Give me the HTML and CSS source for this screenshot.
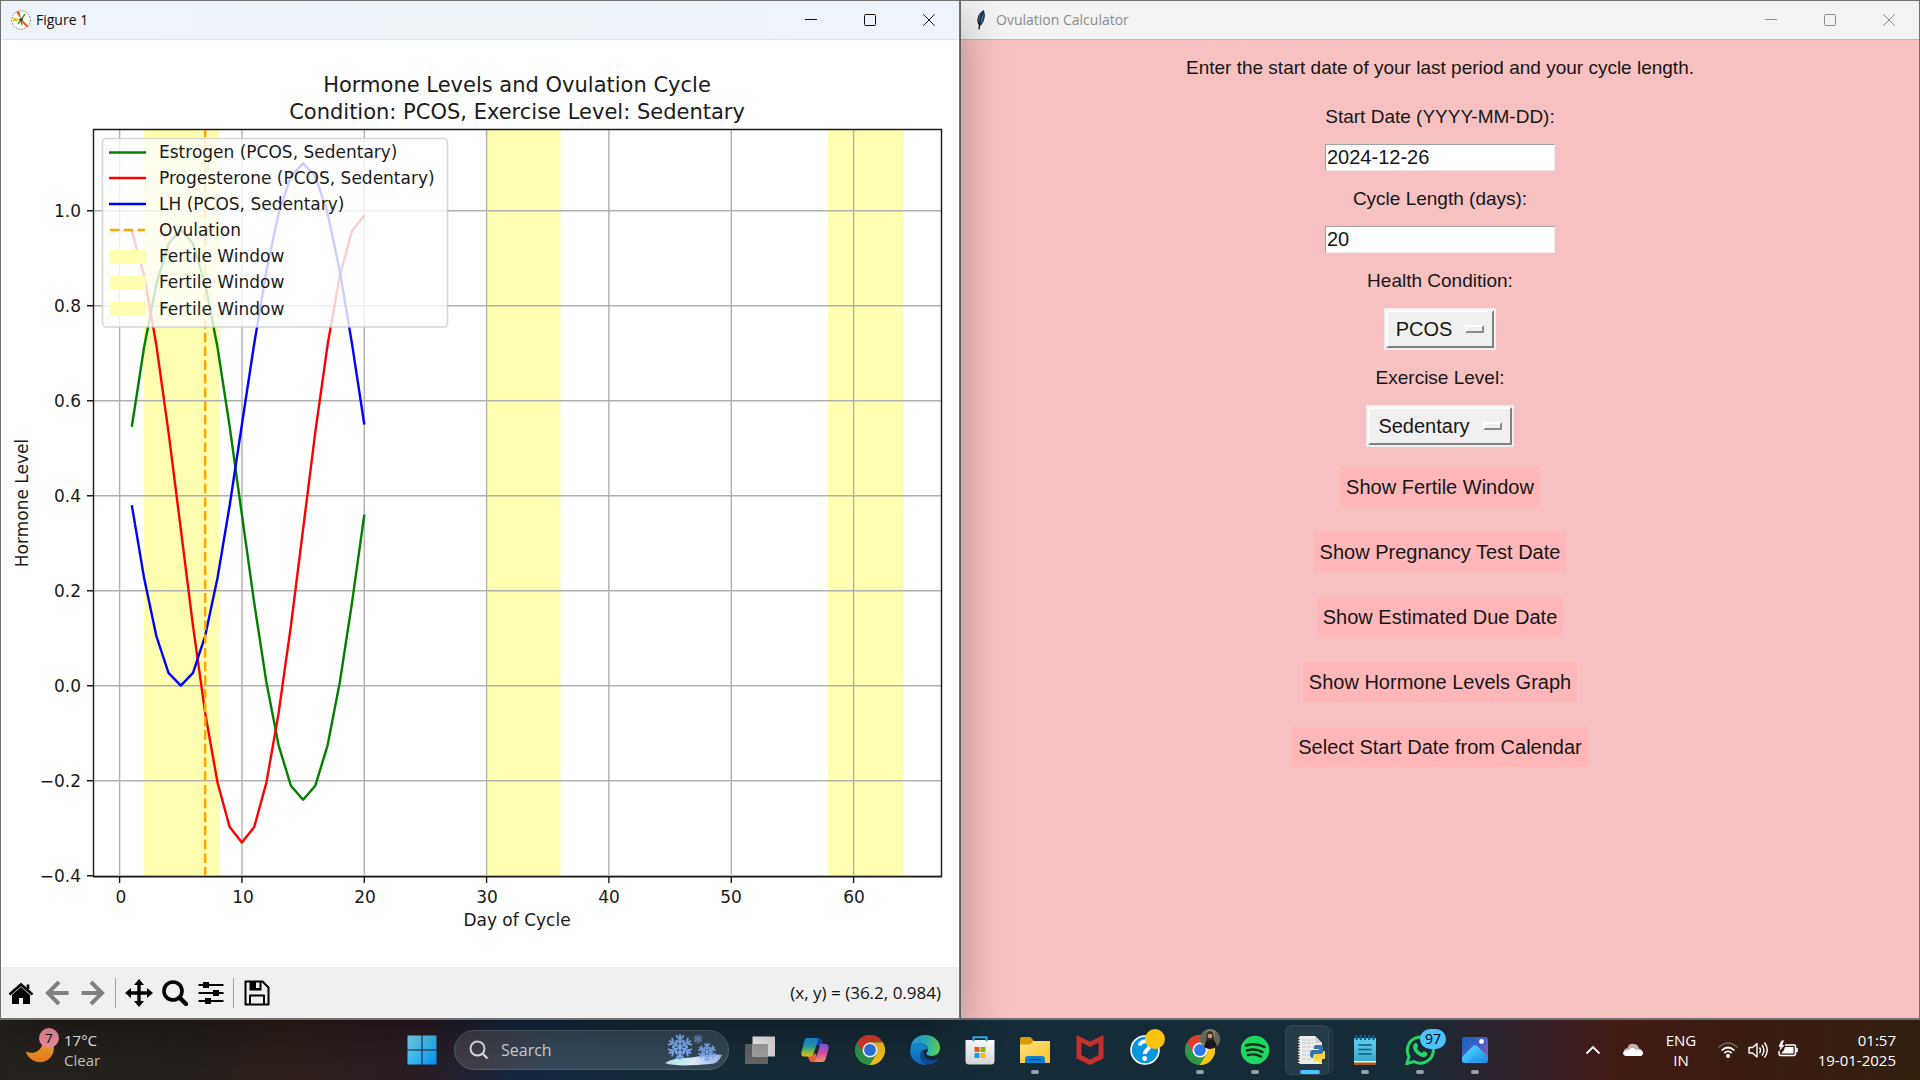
FILE: index.html
```html
<!DOCTYPE html>
<html lang="en">
<head>
<meta charset="utf-8">
<title>Ovulation Calculator</title>
<link rel="stylesheet" href="styles.css">
</head>
<body>
<main class="desktop">
  <section class="window figure-window">
    <header class="titlebar">
      <svg class="title-icon" viewBox="0 0 20 20" aria-hidden="true">
        <circle cx="10" cy="10" r="9.3" fill="#fff" stroke="#777" stroke-width=".8" stroke-dasharray="2 1"/>
        <path d="M10 9 5 1.8 8.5 1.2Z" fill="#f4510b"/><path d="M10 10 2 11.5 2.4 7.4Z" fill="#f5b400"/>
        <path d="m10 10 6.8 6.8" stroke="#f4510b" stroke-width="1.8"/><path d="m10 10 4-6M10 10l-3 4M10 10l1 5" stroke="#3aa335" stroke-width="1.5"/>
        <circle cx="10" cy="9.5" r="1.6" fill="#333"/>
      </svg>
      <h1 class="title-text">Figure 1</h1>
      <div class="caption-buttons">
        <button class="caption-button" aria-label="Minimize"><svg viewBox="0 0 12 12"><path d="M0 5.5h12"/></svg></button>
        <button class="caption-button" aria-label="Maximize"><svg viewBox="0 0 12 12"><rect x=".5" y=".5" width="11" height="11" rx="1"/></svg></button>
        <button class="caption-button" aria-label="Close"><svg viewBox="0 0 12 12"><path d="m.3.3 11.4 11.4M11.7.3.3 11.7"/></svg></button>
      </div>
    </header>
    <svg class="chart" viewBox="2 40 958 927" role="img" aria-label="Hormone levels by day of cycle">
      <g class="fertile">
        <path d="M145 129h75v748h-75zM488 129h73.500v748H488zM829 129h75v748h-75z"/>
      </g>
      <path class="grid" d="M120.600 129v748M243 129v748M365.300 129v748M487.600 129v748M609.900 129v748M732.300 129v748M854.600 129v748M94 210.800h848M94 305.800h848M94 400.800h848M94 495.700h848M94 590.700h848M94 685.700h848M94 780.700h848M94 875.700h848"/>
      <polyline class="line estrogen" points="132.8,426.7 145.1,347.2 157.3,284.2 169.5,243.8 181.8,229.8 194,243.8 206.2,284.2 218.5,347.2 230.7,426.7 242.9,514.7 255.2,602.8 267.4,682.2 279.6,745.3 291.9,785.7 304.1,799.7 316.3,785.7 328.6,745.3 340.8,682.2 353,602.8 365.3,514.7"/>
      <polyline class="line progesterone" points="132.8,230.9 145.1,275.4 157.3,344.8 169.5,432.1 181.8,529 194,625.8 206.2,713.2 218.5,782.5 230.7,827.1 242.9,842.4 255.2,827.1 267.4,782.5 279.6,713.2 291.9,625.8 304.1,529 316.3,432.1 328.6,344.8 340.8,275.4 353,230.9 365.3,215.5"/>
      <polyline class="line lh" points="132.8,505.2 145.1,578 157.3,635.8 169.5,672.9 181.8,685.7 194,672.9 206.2,635.8 218.5,578 230.7,505.2 242.9,424.5 255.2,343.8 267.4,271 279.6,213.2 291.9,176.1 304.1,163.3 316.3,176.1 328.6,213.2 340.8,271 353,343.8 365.3,424.5"/>
      <path class="line ovulation" d="M206.200 876.700V129.300"/>
      <path class="axes" d="M94.500 129.500h848v747.300h-848zM88 210.800h6M88 305.800h6M88 400.800h6M88 495.700h6M88 590.700h6M88 685.700h6M88 780.700h6M88 875.700h6M120.600 877v6M243 877v6M365.300 877v6M487.600 877v6M609.900 877v6M732.300 877v6M854.600 877v6"/>
      <g class="chart-title">
        <text x="518" y="92">Hormone Levels and Ovulation Cycle</text>
        <text x="518" y="119">Condition: PCOS, Exercise Level: Sedentary</text>
      </g>
      <g class="tick-y">
        <text x="82" y="217">1.0</text><text x="82" y="312">0.8</text><text x="82" y="407">0.6</text><text x="82" y="502">0.4</text>
        <text x="82" y="597">0.2</text><text x="82" y="692">0.0</text><text x="82" y="787">−0.2</text><text x="82" y="882">−0.4</text>
      </g>
      <g class="tick-x">
        <text x="122" y="903">0</text><text x="244" y="903">10</text><text x="366" y="903">20</text><text x="488" y="903">30</text>
        <text x="610" y="903">40</text><text x="732" y="903">50</text><text x="855" y="903">60</text>
        <text x="518" y="926">Day of Cycle</text>
        <text transform="translate(29 503) rotate(-90)">Hormone Level</text>
      </g>
      <rect class="legend-box" x="103.500" y="138.500" width="345" height="188.500" rx="4"/>
      <path class="line estrogen" d="M110 152.500h37"/>
      <path class="line progesterone" d="M110 178h37"/>
      <path class="line lh" d="M110 204h37"/>
      <path class="line ovulation" d="M111 230h35"/>
      <path class="fertile" d="M110.500 250H147v14h-36.500zM110.500 276H147v14h-36.500zM110.500 302H147v14h-36.500z"/>
      <g class="legend-text">
        <text x="160" y="158">Estrogen (PCOS, Sedentary)</text>
        <text x="160" y="184">Progesterone (PCOS, Sedentary)</text>
        <text x="160" y="210">LH (PCOS, Sedentary)</text>
        <text x="160" y="236">Ovulation</text>
        <text x="160" y="262">Fertile Window</text>
        <text x="160" y="288">Fertile Window</text>
        <text x="160" y="315">Fertile Window</text>
      </g>
    </svg>
    <footer class="toolbar">
      <div class="tool-group">
        <button class="tool" aria-label="Home"><svg viewBox="0 0 26 26"><path d="M13 7 4 15v9h7v-6h4v6h7v-9z"/><path d="M1.500 14.500 13 4.500l11.500 10M20 9V4.500" fill="none" stroke="#000" stroke-width="2.600"/></svg></button>
        <button class="tool" aria-label="Back" disabled><svg viewBox="0 0 26 26"><path d="M24.500 13H4M15 2 4 13l11 11" fill="none" stroke="#808080" stroke-width="4"/></svg></button>
        <button class="tool" aria-label="Forward" disabled><svg viewBox="0 0 26 26"><path d="M1.500 13H22M11 2l11 11-11 11" fill="none" stroke="#808080" stroke-width="4"/></svg></button>
      </div>
      <div class="tool-group">
        <button class="tool" aria-label="Pan"><svg class="pan" viewBox="0 0 28 28"><path d="M14 0l5 6h-3.300v6.300H22V9l6 5-6 5v-3.300h-6.300V22H19l-5 6-5-6h3.300v-6.300H6V19l-6-5 6-5v3.300h6.300V6H9z"/></svg></button>
        <button class="tool" aria-label="Zoom"><svg viewBox="0 0 26 26"><circle cx="11" cy="11" r="9" fill="none" stroke="#000" stroke-width="3.600"/><path d="m17.500 17.500 6.500 6.500" stroke="#000" stroke-width="4.400" stroke-linecap="round"/></svg></button>
        <button class="tool" aria-label="Configure subplots"><svg viewBox="0 0 26 26"><path d="M.500 5h25M.500 13h25M.500 21h25" stroke="#000" stroke-width="1.800"/><path d="M5 2h6v6H5zM15 10h6v6h-6zM7 18h6v6H7z"/></svg></button>
      </div>
      <div class="tool-group">
        <button class="tool" aria-label="Save"><svg viewBox="0 0 26 26"><path d="M1.500 1.500h17l6 6v17h-23zM6 24.500v-9h14v9" fill="none" stroke="#000" stroke-width="2" stroke-linejoin="round"/><path d="M5.500 1.500h12v9h-12z"/><path d="M12 2.500h3.500V8H12z" fill="#f0f0f0"/></svg></button>
      </div>
      <output class="cursor-position">(x, y) = (36.2, 0.984)</output>
    </footer>
  </section>

  <section class="window calculator-window">
    <header class="titlebar">
      <svg class="title-icon feather" viewBox="0 0 20 20" aria-hidden="true"><path d="M8.500 15C5.500 11 7 4 12.500 1c1.500 5 .5 10-3 14z" fill="#3f79bd" stroke="#172534" stroke-width="1.200"/><path d="M11.500 3C9 8 8.500 13 8 19.500" fill="none" stroke="#111" stroke-width="1.300"/></svg>
      <h1 class="title-text">Ovulation Calculator</h1>
      <div class="caption-buttons">
        <button class="caption-button" aria-label="Minimize"><svg viewBox="0 0 12 12"><path d="M0 5.500h12"/></svg></button>
        <button class="caption-button" aria-label="Maximize"><svg viewBox="0 0 12 12"><rect x=".5" y=".5" width="11" height="11" rx="1"/></svg></button>
        <button class="caption-button" aria-label="Close"><svg viewBox="0 0 12 12"><path d="m.3.3 11.4 11.4M11.700.3.3 11.700"/></svg></button>
      </div>
    </header>
    <form class="calculator">
      <p class="intro">Enter the start date of your last period and your cycle length.</p>
      <label for="start">Start Date (YYYY-MM-DD):</label>
      <input id="start" class="entry" type="text" value="2024-12-26">
      <label for="length">Cycle Length (days):</label>
      <input id="length" class="entry" type="text" value="20">
      <label for="condition">Health Condition:</label>
      <div class="option-menu"><div class="option-face"><select id="condition"><option>PCOS</option></select><span class="option-mark"></span></div></div>
      <label for="exercise">Exercise Level:</label>
      <div class="option-menu"><div class="option-face"><select id="exercise"><option>Sedentary</option></select><span class="option-mark"></span></div></div>
      <div class="actions">
        <button type="button">Show Fertile Window</button>
        <button type="button">Show Pregnancy Test Date</button>
        <button type="button">Show Estimated Due Date</button>
        <button type="button">Show Hormone Levels Graph</button>
        <button type="button">Select Start Date from Calendar</button>
      </div>
    </form>
  </section>
</main>

<nav class="taskbar" aria-label="Taskbar">
  <button class="weather">
    <span class="weather-icon">
      <svg viewBox="0 0 30 30" aria-hidden="true"><defs><linearGradient id="moon" x2="0" y2="1"><stop stop-color="#ffc63a"/><stop offset="1" stop-color="#f0761a"/></linearGradient></defs><path d="M1 16.500c8 4 18-1 17.500-14.500C31 4 31 17 25 23 17 31 3.500 27 1 16.500Z" fill="url(#moon)"/></svg>
      <span class="weather-badge">7</span>
    </span>
    <span class="weather-text"><span>17°C</span><span class="weather-sky">Clear</span></span>
  </button>

  <div class="apps">
    <button class="app" aria-label="Start"><svg viewBox="0 0 30 30"><defs><linearGradient id="win" gradientUnits="userSpaceOnUse" x1="0" y1="0" x2="30" y2="30"><stop stop-color="#86e2ff"/><stop offset=".5" stop-color="#3cc3fb"/><stop offset="1" stop-color="#0091f8"/></linearGradient></defs><path d="M.500.500h14v14h-14zM15.500.500h14v14h-14zM.500 15.500h14v14h-14zM15.500 15.500h14v14h-14z" fill="url(#win)"/></svg></button>
    <button class="search">
      <svg class="search-icon" viewBox="0 0 20 20" aria-hidden="true"><circle cx="8.500" cy="8.500" r="7" fill="none" stroke="#e6e6e6" stroke-width="2"/><path d="m13.500 13.500 5 5" stroke="#e6e6e6" stroke-width="2.200"/></svg>
      <span>Search</span>
      <svg class="search-art" viewBox="0 0 58 32" aria-hidden="true">
        <defs><linearGradient id="snow"><stop stop-color="#aef0f4"/><stop offset=".5" stop-color="#e4f3ff"/><stop offset="1" stop-color="#a6b6ef"/></linearGradient>
        <g id="arm"><path d="M0 0v-12M0-7.500l-3.500-3.500M0-7.500l3.500-3.500M0-4l-3-2.500M0-4l3-2.500"/></g>
        <g id="snowflake" fill="none" stroke="#7fb0fb" stroke-width="2" stroke-linecap="round"><use href="#arm"/><use href="#arm" transform="rotate(60)"/><use href="#arm" transform="rotate(120)"/><use href="#arm" transform="rotate(180)"/><use href="#arm" transform="rotate(240)"/><use href="#arm" transform="rotate(300)"/></g></defs>
        <path d="M0 29c12-7 20-4 30-6 10-2 18-3 27-2-3 6-6 9-12 9-15 1-34 3-45-1Z" fill="url(#snow)"/>
        <use href="#snowflake" transform="translate(15 13)"/><use href="#snowflake" transform="translate(42 18) scale(.72)"/><use href="#snowflake" transform="translate(33 5) scale(.36)" opacity=".7"/>
      </svg>
    </button>
    <button class="app" aria-label="Task view"><svg viewBox="0 0 30 30"><defs><linearGradient id="tv" x2="1" y2="1"><stop stop-color="#fff"/><stop offset="1" stop-color="#d9d9d9"/></linearGradient></defs><path d="M0 9h23v20H0z" fill="#666"/><path d="M7.500 1.500H30v20H7.500z" fill="url(#tv)"/><path d="M7.500 9H23v12.500H7.500z" fill="#a5a5a5"/></svg></button>
    <button class="app" aria-label="Copilot"><svg viewBox="0 0 30 30">
      <defs><linearGradient id="cpa" x2="0" y2="1"><stop stop-color="#1d8fe8"/><stop offset=".45" stop-color="#27a9b8"/><stop offset=".75" stop-color="#8cc63f"/><stop offset="1" stop-color="#f2c22c"/></linearGradient><linearGradient id="cpb" x2="0" y2="1"><stop stop-color="#8a60f0"/><stop offset=".5" stop-color="#e050b8"/><stop offset="1" stop-color="#ff9a5a"/></linearGradient></defs>
      <path d="M14 3h5c2 0 3 2 3.500 4l1 3h-5l-4 0z" fill="#1748bb"/><path d="M7 20h6l3-2 2 9h-6c-2 0-3-2-3.500-4z" fill="#f0653c"/>
      <path d="M7 3h9c2 0 2 2 1.500 3.500L13.500 19c-.5 1.500-1.500 2.500-3.500 2.500H4c-3 0-3-3-2.300-5L4 7c.6-2.500 1.400-4 3-4Z" fill="url(#cpa)"/>
      <path d="M19 9h6c4 0 4 3 3.300 5.500L26 23c-.7 2.500-2 4-4 4h-9c2 0 2.500-1.500 3-3l3.500-12c.4-1.500.5-3-.5-3Z" fill="url(#cpb)"/></svg></button>
    <button class="app" aria-label="Chrome"><svg viewBox="0 0 30 30"><defs><g id="chrome"><circle cx="15" cy="15" r="15" fill="#2b9948"/><path d="M15 15 2 7.500A15 15 0 0 1 28 7.500H15Z" fill="#e33b2e"/><path d="M15 7.500h13A15 15 0 0 1 14.600 30L21.500 18.700Z" fill="#fcc31e"/><path d="M2 7.500 8.500 18.700 12 14l3-6.500Z" fill="#e33b2e"/><path d="M2 7.500A15 15 0 0 0 14.600 30L21.500 18.700H8.500Z" fill="#2b9948"/><circle cx="15" cy="15" r="7.500" fill="#fff"/><circle cx="15" cy="15" r="5.900" fill="#3078ee"/></g></defs><use href="#chrome"/></svg></button>
    <button class="app" aria-label="Edge"><svg viewBox="0 0 30 30"><defs><linearGradient id="eda" x2="1"><stop stop-color="#2fa9ee"/><stop offset=".5" stop-color="#2bc3cf"/><stop offset="1" stop-color="#67dd55"/></linearGradient><linearGradient id="edb" x2="0" y2="1"><stop stop-color="#1b9ce6"/><stop offset="1" stop-color="#0b62c0"/></linearGradient></defs>
      <path d="M.500 12C2 4 8 0 15 0c9 0 15 6 15 13 0 5-4 8-8.500 8-3 0-5-1-5-2.500 0-1 1.500-1.500 1.500-4 0-4-4-6-8.500-6S1.500 9.500.500 12Z" fill="url(#eda)"/>
      <path d="M.300 14C1 9.500 5 7.500 9.500 8.500c5 .5 8.500 3 8.500 6-3-1-7 1-7 6.500 0 4 3 8 7 8.700C8 31-1 24 .300 14Z" fill="url(#edb)"/><path d="M13 14.800c-3 2-4 8-1 11.500 5 5.500 14 3 16.800-2.500-5 2.500-13 2-14.800-4-.5-2 0-4-1-5Z" fill="#0f4c97"/></svg></button>
    <button class="app" aria-label="Microsoft Store"><svg viewBox="0 0 30 30"><defs><linearGradient id="bag" x2="0" y2="1"><stop stop-color="#fff"/><stop offset="1" stop-color="#d6d6d6"/></linearGradient></defs><path d="M.500 5h29v21q0 3.500-3.500 3.500H4Q.500 29.500.500 26z" fill="url(#bag)"/><path d="M8.500 6.500V2.200h13v4.300" fill="none" stroke="#29b4ee" stroke-width="2"/><path d="M9.500 12h5v5h-5z" fill="#f35325"/><path d="M15.500 12h5v5h-5z" fill="#81bc06"/><path d="M9.500 18h5v5h-5z" fill="#05a6f0"/><path d="M15.500 18h5v5h-5z" fill="#ffba08"/></svg></button>
    <button class="app running" aria-label="File Explorer"><svg viewBox="0 0 30 30"><defs><linearGradient id="fold" x2="1" y2="1"><stop stop-color="#ffe180"/><stop offset="1" stop-color="#ffc328"/></linearGradient></defs><path d="M0 3.500Q0 2 1.500 2h9l3.500 4v8H0z" fill="#dc9a06"/><path d="M0 9.500h10l3.500-3.500H30v22H0z" fill="url(#fold)"/><path d="M5 28v-4q0-3 3-3h14q3 0 3 3v4z" fill="#1180d4"/><path d="M9 24.500h12" stroke="#07488c" stroke-width="1.300"/></svg></button>
    <button class="app" aria-label="McAfee"><svg viewBox="0 0 30 30"><path d="M1.500 0 15 6.500 28.500 0v23.500L15 30 1.500 23.500zM6.500 7.500v12.800L15 24.500l8.500-4.200V7.500L15 12z" fill="#c4302b" fill-rule="evenodd"/></svg></button>
    <button class="app" aria-label="Get Help"><svg viewBox="0 0 30 30"><circle cx="15" cy="15" r="14" fill="#0897dc" stroke="#fff" stroke-width="1.600"/><path d="M9.800 10.500C10.500 4.800 19.800 5 19.500 11c-.3 3.700-4.700 4-4.800 8" fill="none" stroke="#fff" stroke-width="3.800"/><circle cx="14.700" cy="23.500" r="2.400" fill="#fff"/></svg><span class="badge dot"></span></button>
    <button class="app running" aria-label="Chrome profile"><svg viewBox="0 0 30 30"><use href="#chrome"/></svg><span class="badge photo"><svg viewBox="0 0 20 20"><defs><clipPath id="face"><circle cx="10" cy="10" r="10"/></clipPath></defs><g clip-path="url(#face)"><path d="M0 0h20v20H0z" fill="#85836b"/><path d="M0 0h7v14H0zM15 3h5v14h-5z" fill="#666753"/><path d="M7 4q3-4 6 0l2 9H6z" fill="#392c25"/><path d="M4 20q0-9 6-9 7 0 7 9z" fill="#16171a"/><circle cx="10" cy="7" r="2.300" fill="#c39a7d"/></g></svg></span></button>
    <button class="app running" aria-label="Spotify"><svg viewBox="0 0 30 30"><circle cx="15" cy="15" r="14.300" fill="#1ed760"/><path d="M6 10.500c6-2 13-1.500 18.500 1.500M7 15.500c5-1.500 11-1 15.500 1.600M8 20c4.500-1.200 9-.7 13 1.600" fill="none" stroke="#142b20" stroke-width="2.400" stroke-linecap="round"/></svg></button>
    <button class="app running active" aria-label="IDLE"><svg viewBox="0 0 30 30"><path d="M3 1h17l7 7v21H3z" fill="#ececea"/><path d="M20 1v7h7" fill="#cfcfcc"/><path d="M7 5h11M7 8h11M7 12h16M7 16h12M7 20h10M7 24h10" stroke="#c4c4c4" stroke-dasharray="4 1"/><path d="M3.500 1v28" stroke="#222" stroke-width="2" stroke-dasharray="1.500 1.200"/>
      <path d="M21 11h4q3 0 3 3v4q0 2-3 2h-4q-2 0-2 2v2h-2q-2-.5-2-4t2-4h7v-1h-5v-2q0-2 2-2Z" fill="#3673a9" transform="translate(0 -1)"/><path d="M24 26h-3q-3 0-3-2v-3q0-2 3-2h4q3 0 3-2v-1h1q2 .5 2 4t-2 4h-6v1h4v1q0 2-3 2z" fill="#ffd445"/></svg></button>
    <button class="app running" aria-label="Notepad"><svg viewBox="0 0 30 30"><defs><linearGradient id="pad" x2="0" y2="1"><stop stop-color="#62d2ec"/><stop offset="1" stop-color="#3aa9cf"/></linearGradient></defs><path d="M4 3h22v23H4z" fill="url(#pad)"/><path d="M4 26h22v2H4z" fill="#f3f1e8"/><path d="M4 27.500h22V30H4z" fill="#a75a1c"/><path d="M6.500 1v3M10.700 1v3M15 1v3M19.300 1v3M23.500 1v3" stroke="#0d5f85" stroke-width="2.400" stroke-linecap="round"/><path d="M8.500 10h13M8.500 14.500h13M8.500 19h13" stroke="#0d5876" stroke-width="1.700"/></svg></button>
    <button class="app running" aria-label="WhatsApp"><svg viewBox="0 0 30 30"><path d="M2 28.500 4 21.500A13 13 0 1 1 9 26.500z" fill="none" stroke="#25d366" stroke-width="3"/><path d="M9.500 8.500q1.500-1.500 2.500 0l1.200 2.800-1.400 2q2 3.500 5.200 4.700l1.800-2 3 1.500q1 .6.300 2.300c-1 2-3 2.600-5 2.100C12 20.500 8.500 16 8 12.500q-.2-2.500 1.500-4Z" fill="#25d366"/></svg><span class="badge count">97</span></button>
    <button class="app running" aria-label="Photos"><svg viewBox="0 0 30 30"><defs><linearGradient id="ph" x2="1" y2="1"><stop stop-color="#0b62c4"/><stop offset=".6" stop-color="#5a60c0"/><stop offset="1" stop-color="#9a62b8"/></linearGradient><linearGradient id="mt" x2="1" y2="1"><stop stop-color="#5be0ff"/><stop offset="1" stop-color="#1a86e8"/></linearGradient></defs><rect x="2" y="2" width="26" height="26" rx="3" fill="url(#ph)"/><path d="m2 22 11-11q2-1.500 4 0l11 11v3q0 3-3 3H5q-3 0-3-3z" fill="url(#mt)"/><path d="m8 28 7-7.500L22.500 28z" fill="#2aa0f0"/><circle cx="21.500" cy="6.500" r="2.400" fill="#fff"/></svg></button>
  </div>

  <div class="tray">
    <button class="tray-button" aria-label="Hidden icons"><svg viewBox="0 0 20 20"><path d="m3.500 13.500 6.500-6.500 6.500 6.500" fill="none" stroke="#fff" stroke-width="1.800"/></svg></button>
    <button class="tray-button cloud" aria-label="OneDrive"><svg viewBox="0 0 20 20"><path d="M1 12q-.5-3.500 3.500-4Q6 3 11 4q4 0 5 4.500 3 .5 3.500 4z" fill="#bdb0ae"/><path d="M2.500 16Q0 15.500 0 13q.5-3 4-2.500l4-2.300q3-1 5 1.800 2-1 4 0 3 .5 3 3.200-.3 2.800-3 2.800z" fill="#fff"/></svg></button>
    <button class="language"><span>ENG</span><span>IN</span></button>
    <button class="status" aria-label="Network, sound and battery">
      <svg viewBox="0 0 20 20"><path d="M.500 7.500Q10-1.500 19.500 7.500" fill="none" stroke="#81645f" stroke-width="1.600"/><path d="M3.500 10.500q6.500-6 13 0M6.200 13.200q3.800-3.500 7.600 0" fill="none" stroke="#fff" stroke-width="1.700"/><circle cx="10" cy="16" r="2" fill="#fff"/></svg>
      <svg viewBox="0 0 20 20"><path d="M1 7.500h3.500L9 3.500v13.500l-4.500-4H1z" fill="none" stroke="#fff" stroke-width="1.400" stroke-linejoin="round"/><path d="M11.500 7.500q2 2.700 0 5.500M14 5q3.800 5.200 0 10.500M16.500 2.500q5.500 7.700 0 15" fill="none" stroke="#fff" stroke-width="1.400"/></svg>
      <svg viewBox="0 0 20 20"><path d="M7 5h9q1.500 0 1.500 1.500v7q0 2-2 2H3q-2 0-2-2V11" fill="none" stroke="#fff" stroke-width="1.500"/><path d="M7 7h8.500v6.500H3.200L6 10z" fill="#fff"/><path d="M18 8h1.800v4H18z" fill="#fff"/><path d="m3.500.5-3 6.300h2L1.500 11l5-6H4.300L6 .5z" fill="#fff"/></svg>
    </button>
    <button class="clock"><span>01:57</span><span>19-01-2025</span></button>
  </div>
</nav>
</body>
</html>
```
FILE: styles.css
```css
* { box-sizing: border-box; }

body {
  margin: 0;
  min-height: 100vh;
  display: grid;
  grid-template-rows: 1fr 60px;
  background: #162b38;
  font-family: "Open Sans", "Noto Sans", sans-serif;
  font-size: 14px;
}

button, input, select {
  font: inherit;
  color: inherit;
  border: 0;
  padding: 0;
  background: none;
}

svg { display: block; }

.desktop {
  display: grid;
  grid-template-columns: 1fr 1fr;
  min-height: 0;
}

.window {
  display: flex;
  flex-direction: column;
  min-height: 0;
  border: 1px solid #707070;
  border-bottom-width: 2px;
}

.figure-window {
  position: relative;
  z-index: 1;
  background: #fff;
  box-shadow: 0 16px 44px rgba(0, 0, 0, 0.32);
}

.calculator-window {
  background: #f8c1c1;
}

/* Title bars */
.titlebar {
  display: flex;
  align-items: center;
  flex: 0 0 39px;
  padding-left: 10px;
  gap: 5px;
  background: linear-gradient(90deg, #eff3fb, #edf3f7 50%, #eff3fb);
  border-bottom: 1px solid #dfe3e8;
  color: #111;
}

.calculator-window .titlebar {
  background: #f3f3f3;
  border-bottom-color: #c8b4b4;
  color: #8d8d8d;
}

.title-icon { width: 20px; height: 20px; }

.title-text {
  margin: 0;
  font-size: 14px;
  font-weight: 400;
  line-height: 20px;
}

.caption-buttons {
  display: flex;
  margin-left: auto;
  padding-right: 1px;
}

.caption-button {
  width: 59px;
  height: 38px;
  display: grid;
  place-items: center;
}

.caption-button svg {
  width: 12px;
  height: 12px;
  fill: none;
  stroke: currentColor;
}

/* Chart */
.chart {
  flex: 1 1 0;
  min-height: 0;
  width: 100%;
  font-family: "DejaVu Sans", sans-serif;
  font-size: 17px;
  fill: #1a1a1a;
}

.chart .fertile { fill: #ffffb2; }
.grid { stroke: #b0b0b0; stroke-width: 1.4; fill: none; }
.axes { stroke: #1a1a1a; stroke-width: 1.4; fill: none; }
.line { fill: none; stroke-width: 2.4; stroke-linejoin: round; }
.estrogen { stroke: #008000; }
.progesterone { stroke: #f00; }
.lh { stroke: #00f; }
.ovulation { stroke: #ffa500; stroke-dasharray: 9.6 4.1; }
.chart-title { font-size: 21px; text-anchor: middle; }
.tick-y { text-anchor: end; }
.tick-x { text-anchor: middle; }
.legend-box { fill: #fff; fill-opacity: 0.8; stroke: #ccc; stroke-opacity: 0.8; stroke-width: 1.6; }

/* Figure toolbar */
.toolbar {
  display: flex;
  align-items: center;
  flex: 0 0 51px;
  padding: 0 18px 0 2px;
  background: #f0f0f0;
}

.tool-group { display: flex; }

.tool-group + .tool-group {
  margin-left: 4px;
  padding-left: 5px;
  border-left: 1px solid #a0a0a0;
}

.tool {
  width: 36px;
  height: 30px;
  display: grid;
  place-items: center;
}

.tool svg { width: 26px; height: 26px; }
.tool .pan { width: 28px; height: 28px; }

.cursor-position {
  margin-left: auto;
  font-size: 17px;
  color: #111;
}

/* Calculator form */
.calculator {
  display: flex;
  flex-direction: column;
  align-items: center;
  gap: 15px;
  padding: 15px 0;
  font-family: "Liberation Sans", Arial, sans-serif;
  font-size: 20px;
  line-height: 25px;
  color: #161616;
}

.intro, .calculator label { font-size: 19px; }

.intro { margin: 0 0 9px; }

.entry {
  width: 230px;
  height: 27px;
  padding: 0 1px;
  background: #fff;
  border: 1px solid #f2eaea;
  border-top-color: #a0a0a0;
  border-left-color: #a0a0a0;
}

.option-menu { border: 2px solid #f0f0f0; }

.option-face {
  display: flex;
  align-items: center;
  gap: 13px;
  height: 38px;
  padding: 0 8px;
  background: #f0f0f0;
  border: 2px solid #808080;
  border-top-color: #fff;
  border-left-color: #fff;
}

.option-face select {
  appearance: none;
  field-sizing: content;
  height: 26px;
}

.option-mark {
  width: 19px;
  height: 8px;
  background: #f0f0f0;
  border: 2px solid #8a8a8a;
  border-top-color: #fff;
  border-left-color: #fff;
}

.actions {
  display: flex;
  flex-direction: column;
  align-items: center;
  gap: 25px;
  margin-top: 5px;
}

.actions button {
  height: 40px;
  padding: 0 6px;
  background: #ffb6b9;
}

/* Taskbar */
.taskbar {
  display: flex;
  background: linear-gradient(90deg, #25221e 0, #26201d 10%, #2e1f1b 15%, #2b1c25 22%, #142740 27%, #162b38 34%, #162b38 73%, #30202a 79%, #431a14 84%, #3b1b12 89%, #32200f 100%);
  color: #fff;
  font-size: 15px;
  line-height: 20px;
}

.weather {
  flex: 0 0 394px;
  display: flex;
  align-items: center;
  gap: 9px;
  padding-left: 25px;
  text-align: left;
}

.weather-icon { position: relative; }
.weather-icon svg { width: 30px; height: 30px; }

.weather-badge {
  position: absolute;
  left: 14px;
  top: -7px;
  width: 20px;
  height: 20px;
  border-radius: 50%;
  background: #ff99a4;
  color: #000;
  font-size: 13px;
  text-align: center;
}

.weather-text, .language, .clock {
  display: flex;
  flex-direction: column;
  justify-content: center;
}

.weather-sky { color: #c9c8c7; }

.apps { display: flex; align-items: center; }

.app {
  position: relative;
  flex: 0 0 55px;
  height: 60px;
  display: grid;
  place-items: center;
}

.app > svg { position: relative; width: 30px; height: 30px; }

.running::after {
  content: "";
  position: absolute;
  bottom: 6px;
  left: 24px;
  width: 8px;
  height: 4px;
  border-radius: 2px;
  background: #98a0a5;
}

.active::before {
  content: "";
  position: absolute;
  inset: 5px 8px 5px 3px;
  border: 1px solid #33495a;
  border-radius: 6px;
  background: #263c49;
  box-shadow: 6px 0 0 -1px #21343f;
}

.active::after {
  left: 18px;
  width: 20px;
  background: #4cc2ff;
}

.badge {
  position: absolute;
  top: 9px;
  left: 28px;
  width: 20px;
  height: 20px;
  border-radius: 10px;
}

.dot { background: #ffc20e; }

.count {
  width: 26px;
  background: #4cc2ff;
  color: #000;
  font-size: 14px;
}

.search {
  display: flex;
  align-items: center;
  gap: 12px;
  width: 275px;
  height: 40px;
  margin: 0 3px 0 5px;
  padding: 0 5px 0 14px;
  border: 1px solid #53616d;
  border-radius: 20px;
  background: linear-gradient(90deg, #443d47, #374a5a 35%, #354956);
  color: #d6dade;
  font-size: 16px;
}

.search-icon { width: 20px; height: 20px; }
.search-art { width: 58px; height: 32px; margin-left: auto; }

.tray {
  display: flex;
  align-items: center;
  margin-left: auto;
  padding-right: 24px;
}

.tray-button {
  width: 40px;
  height: 40px;
  display: grid;
  place-items: center;
}

.tray svg { width: 20px; height: 20px; }

.language { width: 56px; align-items: center; }

.status {
  display: flex;
  gap: 10px;
  margin-left: 9px;
}

.clock { width: 98px; align-items: flex-end; }
```
